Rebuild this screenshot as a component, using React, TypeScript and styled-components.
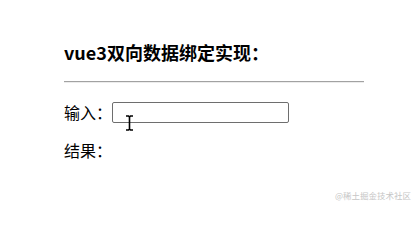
import { createGlobalStyle } from "styled-components";
import styled from "styled-components";

const GlobalStyle = createGlobalStyle`
  html, body {
    margin: 0;
    padding: 0;
    background: #ffffff;
  }
  body {
    font-family: "Noto Sans CJK SC", "Liberation Sans", sans-serif;
    color: #000000;
  }
`;

const Page = styled.div`
  position: relative;
  width: 420px;
  height: 204px;
  overflow: hidden;
  background: #ffffff;
`;

const Content = styled.div`
  display: flex;
  flex-direction: column;
  width: 300px;
  padding: 40px 0 0 64px;
`;

const Title = styled.h3`
  margin: 0;
  font-size: 18px;
  line-height: 24px;
  font-weight: 700;
  white-space: nowrap;
`;

const Divider = styled.hr`
  margin: 17px 0 0;
  height: 0;
  border: none;
  border-top: 1px solid #a2a2a2;
  border-bottom: 1px solid #ececec;
`;

const Row = styled.div<{ $gap: number }>`
  display: flex;
  align-items: center;
  height: 22px;
  margin-top: ${(p) => p.$gap}px;
  font-size: 16px;
  line-height: 22px;
  white-space: nowrap;
`;

const Label = styled.span`
  display: inline-block;
  width: 48px;
`;

const TextInput = styled.input`
  box-sizing: border-box;
  width: 177px;
  height: 21px;
  margin: 0;
  padding: 1px 2px;
  border: 1px solid #6e6e6e;
  border-radius: 2px;
  background: #ffffff;
  font-size: 13px;
  outline: none;
`;

const Cursor = styled.svg`
  position: absolute;
  left: 126px;
  top: 115px;
  width: 7px;
  height: 16px;
`;

const Watermark = styled.span`
  position: absolute;
  right: 9px;
  bottom: 3px;
  font-size: 8.5px;
  line-height: 12px;
  color: #c6c6c6;
  white-space: nowrap;
`;

export default function App() {
  return (
    <Page>
      <GlobalStyle />
      <Content>
        <Title>vue3双向数据绑定实现：</Title>
        <Divider />
        <Row $gap={18}>
          <Label>输入：</Label>
          <TextInput type="text" />
        </Row>
        <Row $gap={16}>
          <Label>结果：</Label>
        </Row>
      </Content>
      <Cursor viewBox="0 0 7 16">
        <path
          d="M0 1 H2.5 L3.5 2 L4.5 1 H7 M3.5 2 V14 M0 15 H2.5 L3.5 14 L4.5 15 H7"
          fill="none"
          stroke="#000"
          strokeWidth="1.6"
        />
      </Cursor>
      <Watermark>@稀土掘金技术社区</Watermark>
    </Page>
  );
}
